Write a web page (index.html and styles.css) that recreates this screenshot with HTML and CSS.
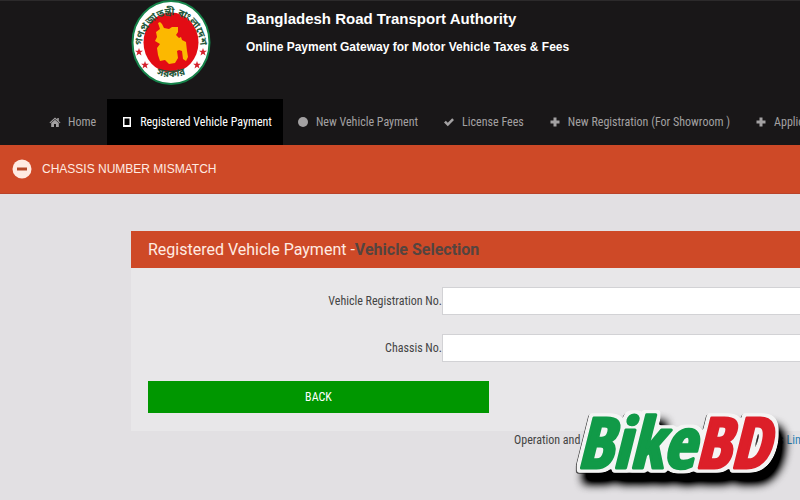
FILE: index.html
```
<!DOCTYPE html>
<html lang="en">
<head>
<meta charset="utf-8">
<meta name="viewport" content="width=device-width, initial-scale=1">
<title>Bangladesh Road Transport Authority</title>
<link rel="stylesheet" href="styles.css">
</head>
<body>
<header class="header">
  <div class="brand">
    <svg class="seal" viewBox="0 0 80 86" aria-hidden="true">
      <defs>
        <path id="arc-top" d="M11 48A29 32 0 1 1 69 48"/>
        <path id="arc-bottom" d="M8 60A34 27 0 0 0 72 60"/>
        <path id="star" d="M0-4 1-1.200H3.900L1.600.6 2.500 3.500 0 1.800-2.500 3.500-1.600.6-3.900-1.200H-1Z"/>
      </defs>
      <ellipse cx="40" cy="43.500" rx="38.500" ry="41.500" fill="#fff" stroke="#16834a" stroke-width="2"/>
      <ellipse cx="40" cy="43.500" rx="27.500" ry="30" fill="#e30c14"/>
      <path fill="#fcb800" d="M27 24l2-1 2 2 2 4 5 1 3-2 6 0v5l-2 3 3 3 2-1 1 3 4 2 1 9 1 6-2 4-3-2-1-8-3-1-2 1 1 7-3 5-6 1-4-4-5 1-2-6-1-7 3-4-5-3 2-4-1-5 4-3z"/>
      <g class="seal-text">
        <text><textPath href="#arc-top" startOffset="50%" text-anchor="middle">গণপ্রজাতন্ত্রী বাংলাদেশ</textPath></text>
        <text><textPath href="#arc-bottom" startOffset="50%" text-anchor="middle">সরকার</textPath></text>
      </g>
      <g fill="#d5202c">
        <use href="#star" x="8" y="53"/><use href="#star" x="14" y="66"/>
        <use href="#star" x="72" y="53"/><use href="#star" x="66" y="66"/>
      </g>
    </svg>
    <div class="brand-text">
      <h1>Bangladesh Road Transport Authority</h1>
      <p>Online Payment Gateway for Motor Vehicle Taxes &amp; Fees</p>
    </div>
  </div>
  <nav class="nav">
    <a href="#"><svg viewBox="0 0 12 12"><path d="M6 1.500.5 6.500l.7.700L6 3l4.800 4.200.7-.7-1.700-1.600V2H8.300v1.500zM2.200 7v4h2.800V8h2v3h2.800V7L6 3.800z"/></svg>Home</a>
    <a href="#" class="active"><svg viewBox="0 0 12 12"><path fill-rule="evenodd" d="M2 1h8v10h-8zM3.500 2.500v6.500h5V2.500z"/></svg>Registered Vehicle Payment</a>
    <a href="#"><svg viewBox="0 0 12 12"><circle cx="6" cy="6" r="5"/></svg>New Vehicle Payment</a>
    <a href="#"><svg viewBox="0 0 12 12"><path d="M1 6.500 2.800 4.800 4.800 6.700 9.200 2.200 11 4 4.800 10.200z"/></svg>License Fees</a>
    <a href="#"><svg viewBox="0 0 12 12"><path d="M4.500 1.500h3v3h3v3h-3v3h-3v-3h-3v-3h3z"/></svg>New Registration (For Showroom )</a>
    <a href="#"><svg viewBox="0 0 12 12"><path d="M4.500 1.500h3v3h3v3h-3v3h-3v-3h-3v-3h3z"/></svg>Application</a>
  </nav>
</header>
<div class="alert" role="alert">
  <svg viewBox="0 0 20 20" aria-hidden="true"><circle cx="10" cy="10" r="9.500" fill="#ffebe2"/><path d="M5 8.500h10v3H5z" fill="#b54828"/></svg>
  <span>CHASSIS NUMBER MISMATCH</span>
</div>
<main class="main">
  <form class="panel">
    <h2>Registered Vehicle Payment -<strong>Vehicle Selection</strong></h2>
    <div class="fields">
      <div class="field"><label for="reg">Vehicle Registration No.</label><input id="reg" type="text"></div>
      <div class="field"><label for="chassis">Chassis No.</label><input id="chassis" type="text"></div>
      <button type="button">BACK</button>
    </div>
  </form>
</main>
<footer class="footer"><span>Operation and</span><span>Systems <a href="#">Limited</a></span></footer>
<svg class="watermark" viewBox="0 0 240 105" role="img" aria-label="BikeBD">
  <defs>
    <filter id="sticker" x="-20%" y="-20%" width="150%" height="150%" color-interpolation-filters="sRGB">
      <feMorphology in="SourceAlpha" operator="dilate" radius="3" result="fat"/>
      <feGaussianBlur in="fat" stdDeviation="1"/>
      <feComponentTransfer result="shape"><feFuncA type="linear" slope="4" intercept="-1.200"/></feComponentTransfer>
      <feFlood flood-color="#f4f4f4"/>
      <feComposite in2="shape" operator="in" result="rim"/>
      <feOffset in="shape" dx="-1" dy="1"/>
      <feComponentTransfer result="edge"><feFuncA type="linear" slope=".6"/></feComponentTransfer>
      <feOffset in="shape" dx="6" dy="11"/>
      <feGaussianBlur stdDeviation="5"/>
      <feComponentTransfer result="shadow"><feFuncA type="linear" slope="1.400"/></feComponentTransfer>
      <feMerge>
        <feMergeNode in="shadow"/><feMergeNode in="edge"/><feMergeNode in="rim"/><feMergeNode in="SourceGraphic"/>
      </feMerge>
    </filter>
  </defs>
  <text x="17" y="73" filter="url(#sticker)"><tspan class="green">Bike</tspan><tspan class="red">BD</tspan></text>
</svg>
</body>
</html>
```
FILE: styles.css
```
* { box-sizing: border-box; }
body {
  margin: 0;
  min-height: 100vh;
  position: relative;
  overflow: hidden;
  background: #e2e0e3;
  color: #444;
  font: 12px/18px "Roboto Condensed", Roboto, "Liberation Sans", Arial, sans-serif;
}
.header { background: #191718; color: #fff; border-top: 1px solid #2c2a2b; }
.brand {
  display: flex;
  padding-left: 131px;
  height: 98px;
  font-family: "Liberation Sans", Arial, sans-serif;
}
.seal { width: 80px; height: 86px; flex: none; margin-top: -2px; }
.seal-text { font: bold 10px "Noto Sans Bengali", "Lohit Bengali", FreeSans, sans-serif; fill: #24573a; }
.brand-text { padding: 7px 0 0 35px; white-space: nowrap; }
h1 { margin: 0; font-size: 15px; line-height: 22px; }
.brand-text p { margin: 7px 0 0; font-size: 12px; line-height: 20px; font-weight: bold; }
.nav { display: flex; padding-left: 35px; overflow: hidden; }
.nav a {
  display: flex;
  flex: none;
  align-items: center;
  gap: 7px;
  height: 46px;
  padding: 0 11px 0 14px;
  color: #a3a1a2;
  text-decoration: none;
  white-space: nowrap;
}
.nav svg { width: 12px; height: 12px; fill: currentColor; }
.nav .active { background: #000; color: #fff; }
.alert {
  display: flex;
  align-items: center;
  gap: 10px;
  height: 49px;
  padding: 0 12px;
  border-bottom: 1px solid #b9432a;
  background: #ce4927;
  color: #ffebe2;
  font-family: "Liberation Sans", Arial, sans-serif;
  font-size: 12px;
}
.alert svg { width: 20px; height: 20px; }
.main { padding: 37px 0 0 131px; overflow: hidden; }
.panel { background: #e8e7e9; }
h2 {
  margin: 0;
  padding: 0 17px;
  background: #ce4927;
  color: #ffebe2;
  font: 16px/37px Roboto, "Liberation Sans", Arial, sans-serif;
  white-space: nowrap;
}
h2 strong { color: #54443f; }
.fields { padding: 19px 0 18px 17px; }
.field { display: flex; align-items: center; margin-bottom: 19px; }
.field label { width: 294px; flex: none; text-align: right; }
.field input {
  flex: 1;
  min-width: 0;
  height: 28px;
  padding: 0 8px;
  border: 1px solid #d2d2d5;
  border-right: 0;
  background: #fff;
  font: inherit;
}
button {
  display: block;
  width: 341px;
  height: 32px;
  padding: 0;
  border: 0;
  background: #009700;
  color: #fff;
  font: inherit;
}
.footer {
  display: flex;
  gap: 163px;
  padding-left: 514px;
  overflow: hidden;
  white-space: nowrap;
}
.footer a { color: #2d80b3; text-decoration: none; }
.watermark {
  position: absolute;
  right: 0;
  bottom: 0;
  width: 240px;
  height: 105px;
  font: italic 800 70px "Open Sans Condensed", "Open Sans", sans-serif;
}
.watermark tspan { stroke-width: 3px; stroke-linejoin: round; }
.green { fill: #119a48; stroke: #119a48; }
.red { fill: #dc1f29; stroke: #dc1f29; }
```
